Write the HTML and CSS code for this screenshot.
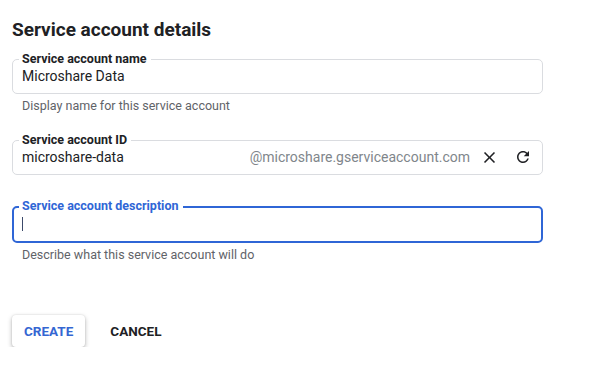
FILE: index.html
```html
<!DOCTYPE html>
<html lang="en">
<head>
  <meta charset="UTF-8" />
  <title>Service account details</title>
  <meta name="viewport" content="width=device-width, initial-scale=1" />
  <link rel="stylesheet" href="styles.css">
</head>
<body>
  <div class="page">
    <h1>Service account details</h1>

    <div class="field">
      <span class="field-label">Service account name</span>
      <div class="field-row">
        <span class="value">Microshare Data</span>
      </div>
    </div>
    <div class="hint">Display name for this service account</div>

    <div class="field field-id">
      <span class="field-label">Service account ID</span>
      <div class="field-row">
        <span class="value">microshare-data</span>
        <span class="suffix">@microshare.gserviceaccount.com</span>
        <svg class="icon icon-close" viewBox="0 0 24 24" width="19" height="19">
          <path d="M19 6.41L17.59 5 12 10.59 6.41 5 5 6.41 10.59 12 5 17.59 6.41 19 12 13.41 17.59 19 19 17.59 13.41 12z"/>
        </svg>
        <svg class="icon icon-refresh" viewBox="0 0 24 24" width="18" height="18">
          <path d="M17.65 6.35C16.2 4.9 14.21 4 12 4c-4.42 0-7.99 3.58-7.99 8s3.57 8 7.99 8c3.73 0 6.84-2.55 7.73-6h-2.08c-.82 2.33-3.04 4-5.65 4-3.31 0-6-2.69-6-6s2.69-6 6-6c1.66 0 3.14.69 4.22 1.78L13 11h7V4l-2.35 2.35z"/>
        </svg>
      </div>
    </div>

    <div class="field field-focus">
      <span class="field-label">Service account description</span>
      <div class="field-row">
        <span class="caret"></span>
      </div>
    </div>
    <div class="hint">Describe what this service account will do</div>

    <div class="actions">
      <button class="btn btn-raised">CREATE</button>
      <button class="btn btn-flat">CANCEL</button>
    </div>
  </div>
</body>
</html>
```

FILE: styles.css
```css
body {
  margin: 0;
  background: #fff;
  font-family: Roboto, "Liberation Sans", Arial, sans-serif;
  color: #202124;
}
.page {
  width: 531px;
  padding: 18px 0 0 12px;
}
h1 {
  margin: 0 0 17px;
  font-size: 19px;
  line-height: 24px;
  font-weight: 700;
}
.field {
  border: 1px solid #dadce0;
  border-radius: 5px;
  padding: 0 10px 9px 9px;
}
.field-label {
  display: block;
  width: fit-content;
  margin: -8px 0 0 -3px;
  padding: 0 4px 0 3px;
  background: #fff;
  font-size: 12.5px;
  line-height: 14px;
  font-weight: 700;
}
.field-row {
  display: flex;
  align-items: center;
  height: 16px;
  margin-top: 2px;
  font-size: 14px;
  line-height: 16px;
}
.value {
  flex: 1;
}
.suffix {
  color: #80868b;
  margin-right: 10px;
}
.icon {
  fill: #202124;
}
.icon-close {
  margin-right: 15px;
}
.hint {
  margin: 4px 0 0 10px;
  font-size: 12.5px;
  line-height: 16px;
  color: #5f6368;
}
.field-id {
  margin-top: 26px;
}
.field-focus {
  margin-top: 31px;
  border: 2px solid #2f66d6;
  padding: 0 9px 8px 8px;
}
.field-focus .field-label {
  margin-top: -9px;
  color: #2f66d6;
}
.field-focus .field-row {
  height: 18px;
}
.caret {
  width: 0;
  height: 14px;
  border-left: 1.5px solid #3c4a6a;
}
.actions {
  display: flex;
  gap: 13px;
  margin-top: 52px;
}
.btn {
  font-family: inherit;
  font-size: 13.5px;
  font-weight: 700;
  height: 32px;
  padding: 0 12px;
  border: none;
  border-radius: 4px;
  background: #fff;
  cursor: pointer;
}
.btn-raised {
  color: #3466d2;
  box-shadow: 0 2px 5px rgba(0, 0, 0, 0.28), 0 0 2px rgba(0, 0, 0, 0.12);
}
.btn-flat {
  color: #202124;
}
```
